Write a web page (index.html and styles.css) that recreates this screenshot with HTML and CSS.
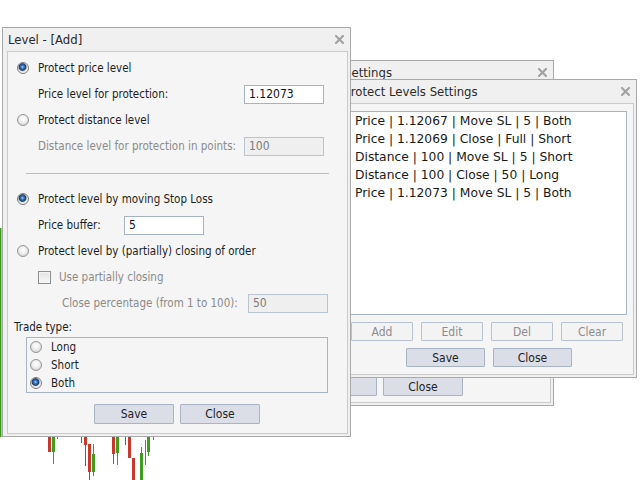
FILE: index.html
```html
<!DOCTYPE html>
<html>
<head>
<meta charset="utf-8">
<title>Level - [Add]</title>
<link rel="stylesheet" href="styles.css">
</head>
<body>
<div class="desktop">
  <svg class="chart" width="640" height="480" viewBox="0 0 640 480">
    <rect x="0" y="228" width="1.5" height="209" fill="#3c9a1c"/>
    <g fill="#c9392b">
      <rect x="48" y="437" width="3" height="15"/>
      <rect x="81" y="437" width="1" height="6"/>
      <rect x="84" y="437" width="3" height="8"/><rect x="85" y="445" width="1" height="21"/>
      <rect x="88" y="444" width="3" height="28"/><rect x="89" y="472" width="1" height="8"/>
      <rect x="112" y="437" width="3" height="17"/><rect x="113" y="454" width="1" height="10"/>
      <rect x="125" y="437" width="1" height="8"/>
      <rect x="128" y="437" width="3" height="21"/>
      <rect x="132" y="458" width="3" height="22"/>
    </g>
    <g fill="#3f9c1e">
      <rect x="52" y="437" width="3" height="15"/><rect x="53" y="452" width="1" height="12"/>
      <rect x="57" y="437" width="1" height="2"/>
      <rect x="93" y="444" width="1" height="32"/><rect x="92" y="454" width="3" height="18"/>
      <rect x="116" y="437" width="3" height="16"/><rect x="117" y="453" width="1" height="12"/>
      <rect x="141" y="447" width="1" height="6"/><rect x="140" y="453" width="3" height="27"/>
      <rect x="145" y="440" width="1" height="25"/>
      <rect x="147" y="437" width="3" height="15"/><rect x="148" y="452" width="1" height="4"/>
      <rect x="153" y="437" width="1" height="3"/>
    </g>
  </svg>

  <div class="win back">
    <div class="title"><span class="back-title">Settings</span>
      <svg class="xbtn" width="9" height="9" viewBox="0 0 9 9"><path d="M1 1 L8 8 M8 1 L1 8" stroke="#a3a3a3" stroke-width="2.2" stroke-linecap="square"/></svg>
    </div>
    <div class="body">
      <div class="client back-client">
        <div class="btns back-btns">
          <div class="btn wide">Save</div>
          <div class="btn wide">Close</div>
        </div>
      </div>
    </div>
  </div>

  <div class="win front">
    <div class="title"><span>Protect Levels Settings</span>
      <svg class="xbtn" width="9" height="9" viewBox="0 0 9 9"><path d="M1 1 L8 8 M8 1 L1 8" stroke="#a3a3a3" stroke-width="2.2" stroke-linecap="square"/></svg>
    </div>
    <div class="body">
      <div class="client front-client">
        <div class="list">
          <div class="item">Price | 1.12067 | Move SL | 5 | Both</div>
          <div class="item">Price | 1.12069 | Close | Full | Short</div>
          <div class="item">Distance | 100 | Move SL | 5 | Short</div>
          <div class="item">Distance | 100 | Close | 50 | Long</div>
          <div class="item">Price | 1.12073 | Move SL | 5 | Both</div>
        </div>
        <div class="btns tools">
          <div class="btn small off">Add</div>
          <div class="btn small off">Edit</div>
          <div class="btn small off">Del</div>
          <div class="btn small off">Clear</div>
        </div>
        <div class="btns front-btns">
          <div class="btn mid">Save</div>
          <div class="btn mid">Close</div>
        </div>
      </div>
    </div>
  </div>

  <div class="win main">
    <div class="title"><span>Level - [Add]</span>
      <svg class="xbtn" width="9" height="9" viewBox="0 0 9 9"><path d="M1 1 L8 8 M8 1 L1 8" stroke="#a3a3a3" stroke-width="2.2" stroke-linecap="square"/></svg>
    </div>
    <div class="body">
      <div class="client main-client">
        <div class="row first"><span class="radio on"></span><span>Protect price level</span></div>
        <div class="row sub"><span class="lbl-a">Price level for protection:</span><span class="input">1.12073</span></div>
        <div class="row"><span class="radio"></span><span>Protect distance level</span></div>
        <div class="row sub"><span class="lbl-a dim">Distance level for protection in points:</span><span class="input dis">100</span></div>
        <div class="sep"></div>
        <div class="row after-sep"><span class="radio on"></span><span>Protect level by moving Stop Loss</span></div>
        <div class="row sub"><span class="lbl-b">Price buffer:</span><span class="input">5</span></div>
        <div class="row"><span class="radio"></span><span>Protect level by (partially) closing of order</span></div>
        <div class="row sub"><span class="check"></span><span class="dim">Use partially closing</span></div>
        <div class="row sub2"><span class="lbl-c dim">Close percentage (from 1 to 100):</span><span class="input dis">50</span></div>
        <div class="row trade">Trade type:</div>
        <div class="group">
          <div class="grow"><span class="radio"></span><span>Long</span></div>
          <div class="grow"><span class="radio"></span><span>Short</span></div>
          <div class="grow"><span class="radio on"></span><span>Both</span></div>
        </div>
        <div class="btns main-btns">
          <div class="btn wide">Save</div>
          <div class="btn wide">Close</div>
        </div>
      </div>
    </div>
  </div>
</div>
</body>
</html>
```

FILE: styles.css
```css
* { box-sizing: border-box; }
html, body { margin: 0; padding: 0; }
body {
  background: #fff;
  font-family: "DejaVu Sans Condensed", "DejaVu Sans", sans-serif;
  font-stretch: condensed;
  font-size: 12px;
  color: #1e1e1e;
}
.desktop { position: relative; width: 640px; height: 480px; overflow: hidden; background: #fff; }
.chart { position: absolute; left: 0; top: 0; }

.win {
  position: absolute;
  display: flex;
  flex-direction: column;
  background: #f0f0f0;
  border: 1px solid #a9a9a9;
}
.title {
  height: 23px;
  flex: none;
  display: flex;
  align-items: center;
  justify-content: space-between;
  padding: 0 6px 0 5px;
  font-size: 13px;
  color: #2a2a2a;
  white-space: nowrap;
}
.xbtn { flex: none; }
.body { flex: 1; display: flex; padding: 0 2px 2px 4px; }
.client {
  flex: 1;
  border: 1px solid #cacaca;
  background: #f5f5f5;
  display: flex;
  flex-direction: column;
}

/* windows on the desktop */
.main { left: 2px; top: 27px; width: 349px; height: 410px; }
.front { left: 338px; top: 79px; width: 299px; height: 299px; }
.back { left: 207px; top: 60px; width: 347px; height: 346px; }

.back-title { padding-left: 131px; }
.back-client { justify-content: flex-end; padding-bottom: 6px; }

/* buttons */
.btns { display: flex; flex: none; }
.btn {
  height: 19px;
  display: flex;
  align-items: center;
  justify-content: center;
  background: #dcdee7;
  border: 1px solid #a8b3c4;
  border-radius: 1px;
  color: #222;
}
.btn.wide { width: 80px; height: 20px; }
.btn.mid { width: 79px; }
.btn.small { width: 62px; }
.btn.off { background: #f3f3f3; border-color: #b8c2cf; color: #8c8c8c; }
.back-btns { justify-content: center; gap: 6px; padding-right: 3px; }
.back-btns .btn { height: 19px; }

/* front window */
.front-client { padding: 7px 6px 7px 6px; }
.list {
  height: 204px;
  flex: none;
  background: #fff;
  border: 1px solid #a9b4c2;
  padding: 0 0 0 4px;
}
.item {
  height: 18px;
  line-height: 18px;
  white-space: nowrap;
  color: #1a1a1a;
  font-family: "DejaVu Sans", sans-serif;
  font-stretch: normal;
  font-size: 12.3px;
}
.tools { margin-top: 7px; gap: 8px; padding-left: 1px; }
.front-btns { margin-top: 7px; gap: 8px; padding-left: 56px; }

/* main dialog */
.main-client { padding: 6px 0 0 9px; font-size: 11.5px; }
.row { height: 20px; flex: none; display: flex; align-items: center; margin-top: 6px; white-space: nowrap; }
.row.first { margin-top: 0; }
.row.after-sep { margin-top: 15px; }
.sub { padding-left: 21px; }
.sub2 { padding-left: 45px; }
.lbl-a { width: 206px; }
.lbl-b { width: 86px; }
.lbl-c { width: 186px; }
.dim { color: #8a8a8a; }
.input {
  width: 80px;
  height: 19px;
  border: 1px solid #a5b3c5;
  background: #fff;
  padding: 0 4px;
  display: flex;
  align-items: center;
  color: #111;
  font-size: 12px;
}
.input.dis { background: #efefef; border-color: #bac4d0; color: #7c7c7c; }
.sep { height: 1px; width: 303px; margin: 17px 0 0 9px; background: #b6bec8; flex: none; }

.radio {
  width: 12px;
  height: 12px;
  flex: none;
  border-radius: 50%;
  border: 1px solid #959595;
  background: radial-gradient(circle at 50% 40%, #ffffff 0, #f2f2f2 3px, #d6d6d6 6px);
  margin-right: 9px;
}
.radio.on {
  border-color: #7d7d7d;
  background: radial-gradient(circle at 45% 40%, #a9d0f5 0, #3d78c2 1.5px, #173f78 3.4px, #9a9a9a 3.9px, #e6e6e6 4.6px, #f6f6f6 6px);
}
.check {
  width: 13px;
  height: 13px;
  flex: none;
  border: 1px solid #8e8e8e;
  background: linear-gradient(#e3e3e3, #f7f7f7);
  box-shadow: inset 0 0 0 1px #f4f4f4;
  margin-right: 8px;
}
.trade { margin-top: 5px; height: 18px; margin-left: -3px; }
.group {
  margin: 1px 0 0 9px;
  width: 302px;
  flex: none;
  border: 1px solid #a9b4c2;
  padding: 0 0 0 3px;
}
.grow { height: 18px; display: flex; align-items: center; }
.main-btns { margin-top: 11px; gap: 6px; padding-left: 77px; font-size: 12px; }
```
